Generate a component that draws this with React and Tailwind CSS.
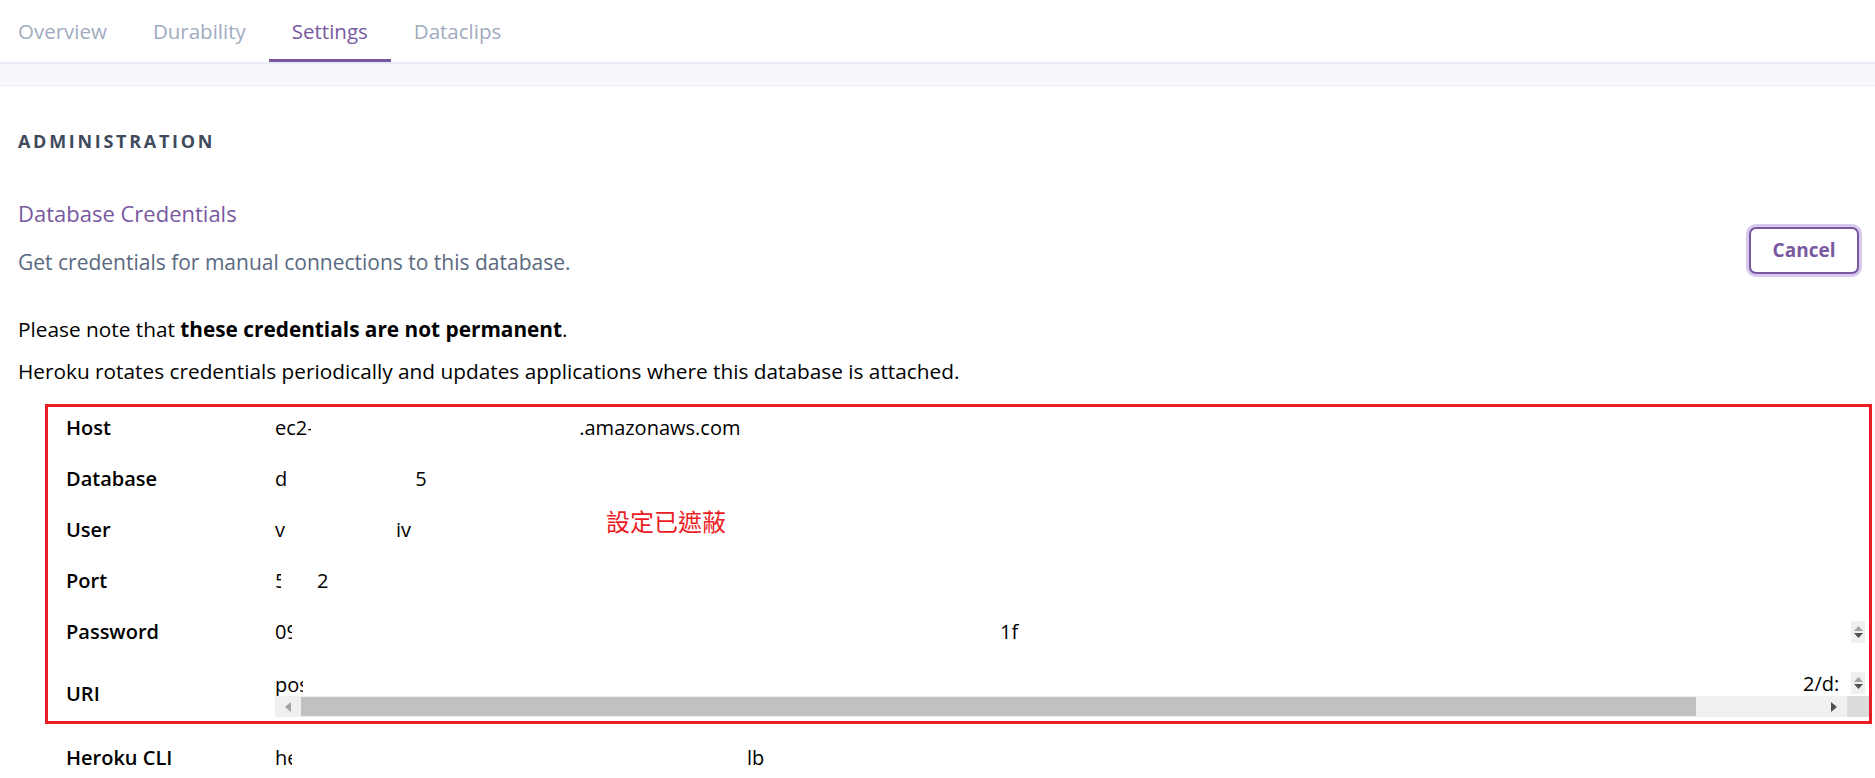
import React from 'react';

const tabs = ['Overview', 'Durability', 'Settings', 'Dataclips'];

const Spinner = () => (
  <div className="flex flex-col items-center justify-center w-[14px] h-[22px] bg-[#f0f0f0] gap-[2px]">
    <svg width="9" height="5" viewBox="0 0 9 5"><path d="M4.5 0L9 5H0z" fill="#a3a3a3" /></svg>
    <svg width="9" height="5" viewBox="0 0 9 5"><path d="M0 0h9L4.5 5z" fill="#505050" /></svg>
  </div>
);

const Row = ({ label, children, cls = 'h-[51px]' }) => (
  <div className={`flex items-center ${cls}`}>
    <div className="w-[209px] text-[20px] font-semibold text-black shrink-0">{label}</div>
    <div className="flex-1 relative h-full flex items-center text-[20px] text-black">{children}</div>
  </div>
);

export default function App() {
  return (
    <div className="w-[1875px] h-[778px] overflow-hidden bg-white font-['Open_Sans',sans-serif]">
      {/* tabs */}
      <div className="flex h-[62px] items-stretch">
        {tabs.map((t, i) => (
          <div
            key={t}
            className={`flex items-center pt-[3px] text-[20.5px] ${i === 0 ? 'pl-[18px] pr-[23px]' : 'px-[23px]'} ${
              t === 'Settings'
                ? 'text-[#79589f] border-b-[3px] border-[#79589f]'
                : 'text-[#a0abc0] border-b-[3px] border-transparent'
            }`}
          >
            {t}
          </div>
        ))}
      </div>
      <div className="h-[24px] bg-[#f7f8fb] border-t-[2px] border-b border-[#e8ebf3]" />

      <div className="pl-[18px] pr-[16px]">
        <div className="pt-[43px] text-[18px] font-bold tracking-[0.15em] text-[#3f4a5c] leading-[24px]">
          ADMINISTRATION
        </div>

        <div className="flex items-start justify-between mt-[47px]">
          <div>
            <div className="text-[22px] text-[#79589f] leading-[26px]">Database Credentials</div>
            <div className="text-[21px] text-[#596981] leading-[24px] mt-[24px]">
              Get credentials for manual connections to this database.
            </div>
          </div>
          <button className="mt-[27px] w-[110px] h-[47px] rounded-[7px] border-[2px] border-[#79589f] ring-[3px] ring-[#d7c9ef] text-[#79589f] font-bold text-[19px] bg-white">
            Cancel
          </button>
        </div>

        <div className="mt-[43px] text-[20.8px] text-black leading-[24px]">
          Please note that <span className="font-bold">these credentials are not permanent</span>.
        </div>
        <div className="mt-[18px] text-[20.8px] text-black leading-[24px]">
          Heroku rotates credentials periodically and updates applications where this database is attached.
        </div>
      </div>

      <div className="ml-[45px] mr-[3px] mt-[21px] border-[3px] border-[#ed1c24] pl-[18px]">
        <Row label="Host" cls="h-[46px] pb-[4px]">
          <span>ec2</span>
          <span className="inline-block w-[4px] overflow-hidden">-</span>
          <span className="ml-[268px]">.amazonaws.com</span>
        </Row>
        <Row label="Database">
          <span>d</span>
          <span className="ml-[128px]">5</span>
        </Row>
        <Row label="User">
          <span>v</span>
          <span className="ml-[111px]">iv</span>
          <span className="absolute left-[331px] top-0 leading-[34px] text-[24px] text-[#ed1c24] font-['Noto_Sans_CJK_TC',sans-serif]">
            設定已遮蔽
          </span>
        </Row>
        <Row label="Port">
          <span className="inline-block w-[6px] overflow-hidden">5</span>
          <span className="ml-[36px]">2</span>
        </Row>
        <Row label="Password">
          <span className="inline-block w-[17px] overflow-hidden">09</span>
          <span className="ml-[708px]">1f</span>
          <div className="absolute right-[4px] top-1/2 -translate-y-1/2">
            <Spinner />
          </div>
        </Row>
        <div className="flex h-[64px] pb-[4px]">
          <div className="w-[209px] text-[20px] font-semibold text-black shrink-0 flex items-center pt-[14px]">URI</div>
          <div className="flex-1 flex flex-col">
            <div className="relative h-[39px] text-[20px] text-black overflow-hidden">
              <span className="absolute left-0 top-[15px] w-[28px] overflow-hidden leading-[26px]">pos</span>
              <span className="absolute right-[30px] top-[14px] leading-[26px] w-[36px] overflow-hidden">2/d:</span>
              <div className="absolute right-[4px] top-[15px]">
                <Spinner />
              </div>
            </div>
            <div className="flex h-[21px] bg-[#f0f0f0] items-center">
              <div className="w-[26px] flex items-center justify-center">
                <svg width="6" height="10" viewBox="0 0 6 10"><path d="M6 0v10L0 5z" fill="#a3a3a3" /></svg>
              </div>
              <div className="w-[1395px] h-[19px] bg-[#c1c1c1]" />
              <div className="flex-1" />
              <div className="w-[26px] flex items-center justify-center">
                <svg width="6" height="10" viewBox="0 0 6 10"><path d="M0 0v10l6-5z" fill="#505050" /></svg>
              </div>
              <div className="w-[22px] h-full bg-[#dcdcdc]" />
            </div>
          </div>
        </div>
      </div>

      <div className="ml-[66px] flex items-center h-[68px]">
        <div className="w-[209px] text-[20px] font-semibold text-black shrink-0">Heroku CLI</div>
        <div className="text-[20px] text-black flex">
          <span className="inline-block w-[17px] overflow-hidden">he</span>
          <span className="ml-[455px]">lb</span>
        </div>
      </div>
    </div>
  );
}
